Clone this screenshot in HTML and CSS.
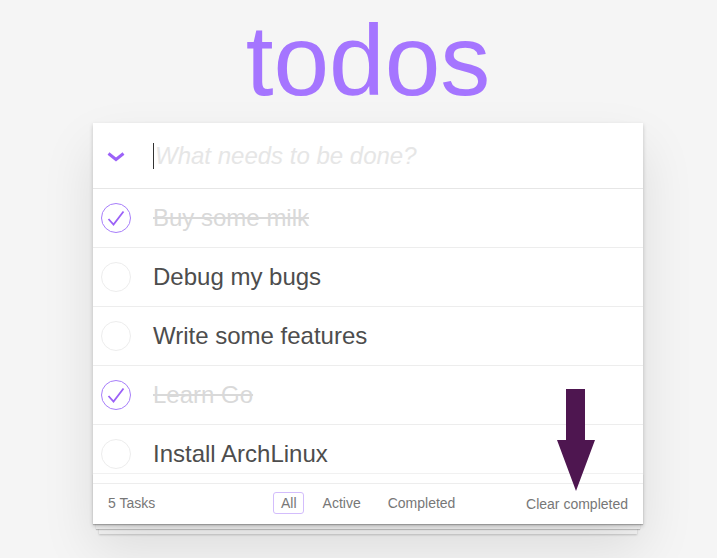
FILE: index.html
```html
<!DOCTYPE html>
<html lang="en">
<head>
<meta charset="utf-8">
<title>todos</title>
<link rel="stylesheet" href="styles.css">
</head>
<body>
<section class="app">
  <h1 class="title">todos</h1>
  <div class="card">
    <header class="header">
      <span class="toggle-all">
        <svg width="18" height="12" viewBox="0 0 18 12"><path d="M1.5 2.5 L9 8.5 L16.5 2.5" fill="none" stroke="#9c62f8" stroke-width="3"/></svg>
      </span>
      <div class="new-todo"><span class="caret"></span><span class="placeholder">What needs to be done?</span></div>
    </header>
    <ul class="list">
      <li class="item done">
        <span class="check on"><svg width="30" height="30" viewBox="0 0 30 30"><path d="M7.5 16 L12.5 21.5 L22.5 8.5" fill="none" stroke="#9b61f7" stroke-width="1.8"/></svg></span>
        <span class="label">Buy some milk</span>
      </li>
      <li class="item">
        <span class="check"></span>
        <span class="label">Debug my bugs</span>
      </li>
      <li class="item">
        <span class="check"></span>
        <span class="label">Write some features</span>
      </li>
      <li class="item done">
        <span class="check on"><svg width="30" height="30" viewBox="0 0 30 30"><path d="M7.5 16 L12.5 21.5 L22.5 8.5" fill="none" stroke="#9b61f7" stroke-width="1.8"/></svg></span>
        <span class="label">Learn Go</span>
      </li>
      <li class="item">
        <span class="check"></span>
        <span class="label">Install ArchLinux</span>
      </li>
    </ul>
    <footer class="footer">
      <span class="count">5 Tasks</span>
      <nav class="filters">
        <span class="filter selected">All</span>
        <span class="filter">Active</span>
        <span class="filter">Completed</span>
      </nav>
      <span class="clear">Clear completed</span>
    </footer>
    <svg class="arrow" width="40" height="104" viewBox="0 0 40 104"><polygon points="9,0 28,0 28,51 38,51 19,102 0,51 9,51" fill="#4e1650"/></svg>
  </div>
</section>
</body>
</html>
```

FILE: styles.css
```css
html, body {
  margin: 0;
  padding: 0;
}
body {
  background: #f5f5f5;
  font-family: "Liberation Sans", Arial, sans-serif;
  color: #4d4d4d;
  padding-left: 19px;
  height: 558px;
  overflow: hidden;
}
.app {
  width: 550px;
  margin: 0 auto;
}
.title {
  margin: 10px 0 13px;
  height: 100px;
  font-size: 100px;
  line-height: 100px;
  font-weight: 400;
  text-align: center;
  color: #a575ff;
}
.card {
  position: relative;
  background: #fff;
  box-shadow: 0 2px 4px rgba(0,0,0,0.2), 0 25px 50px rgba(0,0,0,0.1);
}
.card::before {
  content: "";
  position: absolute;
  left: 0;
  right: 0;
  bottom: 0;
  height: 50px;
  z-index: -1;
  box-shadow: 0 1px 1px rgba(0,0,0,0.2), 0 8px 0 -3px #f6f6f6, 0 9px 1px -3px rgba(0,0,0,0.2), 0 16px 0 -6px #f6f6f6, 0 17px 2px -6px rgba(0,0,0,0.2);
}
.header {
  display: flex;
  align-items: center;
  height: 65px;
  border-bottom: 1px solid #e6e6e6;
}
.toggle-all {
  width: 60px;
  box-sizing: border-box;
  padding-left: 14px;
  display: flex;
  padding-top: 3px;
}
.new-todo {
  display: flex;
  align-items: center;
  font-size: 24px;
  font-style: italic;
  color: #e6e6e6;
}
.caret {
  width: 1px;
  height: 26px;
  background: #333;
  margin-right: 1px;
}
.list {
  position: relative;
  list-style: none;
  margin: 0;
  padding: 0;
}
.list::after {
  content: "";
  position: absolute;
  left: 0;
  right: 0;
  bottom: 10px;
  height: 1px;
  background: #f1f1f1;
}
.item {
  display: flex;
  align-items: center;
  height: 58px;
  border-bottom: 1px solid #ededed;
  font-size: 24px;
}
.check {
  width: 30px;
  height: 30px;
  box-sizing: border-box;
  border: 1px solid #ededed;
  border-radius: 50%;
  margin: 0 22px 0 8px;
  display: flex;
  align-items: center;
  justify-content: center;
  position: relative;
}
.check svg {
  position: absolute;
  left: -1px;
  top: -1px;
}
.check.on {
  border-color: #a77efa;
}
.label {
  line-height: 1.2;
}
.done .label {
  color: #d9d9d9;
  text-decoration: line-through;
}
.footer {
  display: flex;
  align-items: center;
  box-sizing: border-box;
  height: 40px;
  padding: 0 15px 2px;
  font-size: 14px;
  color: #777;
}
.count {
  width: 165px;
}
.filters {
  display: flex;
  gap: 11px;
  flex: 1;
}
.filter {
  padding: 3px 7px;
  border: 1px solid transparent;
  border-radius: 3px;
  line-height: 14px;
}
.filter.selected {
  border-color: #d3bdfc;
  padding: 3px 6px 3px 7px;
}
.clear {
  padding-top: 2px;
}
.arrow {
  position: absolute;
  left: 464px;
  top: 266px;
}
```
